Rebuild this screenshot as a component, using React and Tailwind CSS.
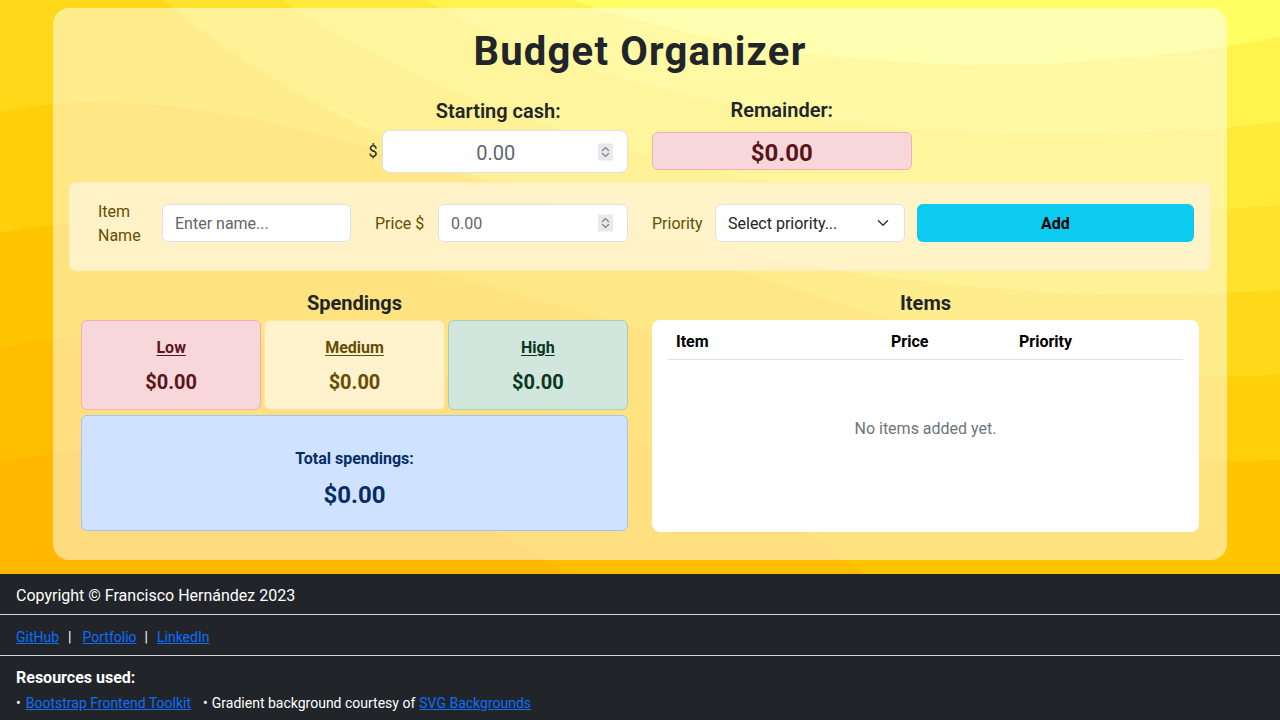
import React from "react";

function Spinner() {
  return (
    <span className="pointer-events-none absolute right-[15px] top-1/2 -translate-y-1/2 flex h-[17px] w-[15px] flex-col items-center justify-center gap-[1px] bg-[#e9e9ed]">
      <svg width="9" height="5" viewBox="0 0 9 5" fill="none">
        <path d="M1 4.5 L4.5 1 L8 4.5" stroke="#7d7d84" strokeWidth="1.1" />
      </svg>
      <svg width="9" height="5" viewBox="0 0 9 5" fill="none">
        <path d="M1 0.5 L4.5 4 L8 0.5" stroke="#7d7d84" strokeWidth="1.1" />
      </svg>
    </span>
  );
}

function Background() {
  return (
    <svg
      className="absolute inset-0 h-full w-full"
      viewBox="0 0 1280 574"
      preserveAspectRatio="none"
    >
      <rect width="1280" height="574" fill="#ffb700" />
      <path d="M0,463 C200,420 420,470 565,574 L1280,574 L1280,0 L0,0 Z" fill="#ffbe00" />
      <path d="M0,347 C250,300 650,400 865,574 L1280,574 L1280,0 L0,0 Z" fill="#ffc600" />
      <path d="M0,233 C350,160 900,480 1280,460 L1280,0 L0,0 Z" fill="#ffcf0c" />
      <path d="M0,112 C350,40 850,400 1280,375 L1280,0 L0,0 Z" fill="#ffd81a" />
      <path d="M163,0 C400,200 850,320 1280,290 L1280,0 Z" fill="#ffe22b" />
      <path d="M282,0 C500,150 900,240 1280,205 L1280,0 Z" fill="#ffea3a" />
      <path d="M424,0 C620,110 950,160 1280,122 L1280,0 Z" fill="#fff34c" />
      <path d="M571,0 C750,60 1000,90 1280,37 L1280,0 Z" fill="#ffff63" />
    </svg>
  );
}

export default function App() {
  return (
    <div className="flex min-h-screen flex-col font-['Segoe_UI',Roboto,'Noto_Sans',sans-serif] text-[#212529]">
      <main className="relative overflow-hidden px-[53px] pb-[14px] pt-2">
        <Background />
        <div className="relative rounded-2xl bg-white/50 px-4 pb-[28px] pt-[20px]">
          <h1 className="text-center text-[40px] font-bold leading-[48px] tracking-[1.2px] text-[#212529]">
            Budget Organizer
          </h1>

          <div className="mt-[22px] flex justify-center">
            <div className="flex w-[283.5px] flex-col px-3">
              <div className="pt-[1px] text-center text-[20px] font-semibold leading-6">Starting cash:</div>
              <div className="mt-[7px] flex items-center gap-[4px]">
                <span className="pt-[1px] text-base leading-6">$</span>
                <div className="relative flex-1">
                  <input
                    readOnly
                    placeholder="0.00"
                    className="h-[43px] w-full rounded-lg border border-[#dee2e6] bg-white pl-3 pr-[30px] pt-[2px] text-center text-[20px] outline-none placeholder:text-[#5f666d]"
                  />
                  <Spinner />
                </div>
              </div>
            </div>
            <div className="flex w-[283.5px] flex-col px-3">
              <div className="text-center text-[20px] font-semibold leading-6">Remainder:</div>
              <div className="mt-[10px] flex h-[38px] items-center justify-center rounded-md border border-[#f1aeb5] bg-[#f8d7da] pt-[3px] text-[24px] font-bold text-[#58151c]">
                $0.00
              </div>
            </div>
          </div>

          <div className="mt-[9px] rounded-md border border-[#fdecb5] bg-[#fff3cd]/90 pb-[23px] pl-[28px] pt-[16px]">
            <div className="flex h-12 items-center">
              <label className="w-[64px] pt-[2px] text-base leading-6 text-[#664d03]">Item Name</label>
              <input
                readOnly
                placeholder="Enter name..."
                className="h-[38px] w-[189px] rounded-md border border-[#dee2e6] bg-white pl-3 pt-[1px] text-base outline-none placeholder:text-[#5f666d]"
              />
              <label className="ml-[24px] w-[63px] pt-[1px] text-base leading-6 text-[#664d03]">Price $</label>
              <div className="relative w-[190px]">
                <input
                  readOnly
                  placeholder="0.00"
                  className="h-[38px] w-full rounded-md border border-[#dee2e6] bg-white pl-3 pt-[1px] text-base outline-none placeholder:text-[#5f666d]"
                />
                <Spinner />
              </div>
              <label className="ml-[24px] w-[63px] pt-[1px] text-base leading-6 text-[#664d03]">Priority</label>
              <div className="flex h-[38px] w-[190px] items-center justify-between rounded-md border border-[#dee2e6] bg-white pl-3 pr-[13px] text-base">
                <span className="pt-[1px]">Select priority...</span>
                <svg width="16" height="12" viewBox="0 0 16 16" fill="none">
                  <path d="M2 5l6 6 6-6" stroke="#343a40" strokeWidth="2" strokeLinecap="round" strokeLinejoin="round" />
                </svg>
              </div>
              <button className="ml-[12px] h-[38px] w-[277px] rounded-md bg-[#0dcaf0] pt-[1px] text-base font-bold text-black">
                Add
              </button>
            </div>
          </div>

          <div className="mt-[19px] grid grid-cols-2 gap-6 px-3">
            <div className="flex flex-col">
              <h2 className="pt-[1px] text-center text-[20px] font-bold leading-6">Spendings</h2>
              <div className="mt-[5px] grid grid-cols-3 gap-[3px]">
                <div className="flex h-[90px] flex-col items-center rounded-md border border-[#f1aeb5] bg-[#f8d7da] pt-[15px] text-[#58151c]">
                  <span className="text-base font-bold leading-6 underline underline-offset-2">Low</span>
                  <span className="mt-[10px] text-[20px] font-bold leading-6">$0.00</span>
                </div>
                <div className="flex h-[90px] flex-col items-center rounded-md border border-[#ffe69c] bg-[#fff3cd] pt-[15px] text-[#664d03]">
                  <span className="text-base font-bold leading-6 underline underline-offset-2">Medium</span>
                  <span className="mt-[10px] text-[20px] font-bold leading-6">$0.00</span>
                </div>
                <div className="flex h-[90px] flex-col items-center rounded-md border border-[#a3cfbb] bg-[#d1e7dd] pt-[15px] text-[#0a3622]">
                  <span className="text-base font-bold leading-6 underline underline-offset-2">High</span>
                  <span className="mt-[10px] text-[20px] font-bold leading-6">$0.00</span>
                </div>
              </div>
              <div className="mt-[5px] flex h-[116px] flex-col items-center rounded-md border border-[#9ec5fe] bg-[#cfe2ff] pt-[31px] text-[#052c65]">
                <span className="text-base font-bold leading-6">Total spendings:</span>
                <span className="mt-[9px] text-[24px] font-bold leading-[30px]">$0.00</span>
              </div>
            </div>

            <div className="flex flex-col">
              <h2 className="pt-[1px] text-center text-[20px] font-bold leading-6">Items</h2>
              <div className="mt-[5px] h-[212px] rounded-lg bg-white px-4">
                <div className="flex h-[40px] items-center border-b border-[#dee2e6] pt-[4px] text-base font-bold text-black">
                  <span className="w-[215px] pl-2">Item</span>
                  <span className="w-[128px] pl-2">Price</span>
                  <span className="pl-2">Priority</span>
                </div>
                <div className="mt-[57px] text-center text-base leading-6 text-[#6c757d]">
                  No items added yet.
                </div>
              </div>
            </div>
          </div>
        </div>
      </main>

      <footer className="flex-1 bg-[#212529] pb-4 text-white">
        <div className="px-4 pt-[10px] text-base leading-6">Copyright © Francisco Hernández 2023</div>
        <div className="mt-[6px] h-px bg-[#d3d4d5]" />
        <div className="mt-[12px] flex items-center px-4 text-sm leading-[21px]">
          <a className="text-[#0d6efd] underline">GitHub</a>
          <span className="ml-[9px]">|</span>
          <a className="ml-[11px] text-[#0d6efd] underline">Portfolio</a>
          <span className="ml-[8px]">|</span>
          <a className="ml-[9px] text-[#0d6efd] underline">LinkedIn</a>
        </div>
        <div className="mt-[7px] h-px bg-[#d3d4d5]" />
        <div className="mt-[10px] px-4 text-base font-bold leading-6">Resources used:</div>
        <div className="mt-[3px] flex items-center px-4 text-sm leading-[21px]">
          <span>•</span>
          <a className="ml-[5px] text-[#0d6efd] underline">Bootstrap Frontend Toolkit</a>
          <span className="ml-[12px]">•</span>
          <span className="ml-[4px]">Gradient background courtesy of</span>
          <a className="ml-[4px] text-[#0d6efd] underline">SVG Backgrounds</a>
        </div>
      </footer>
    </div>
  );
}
